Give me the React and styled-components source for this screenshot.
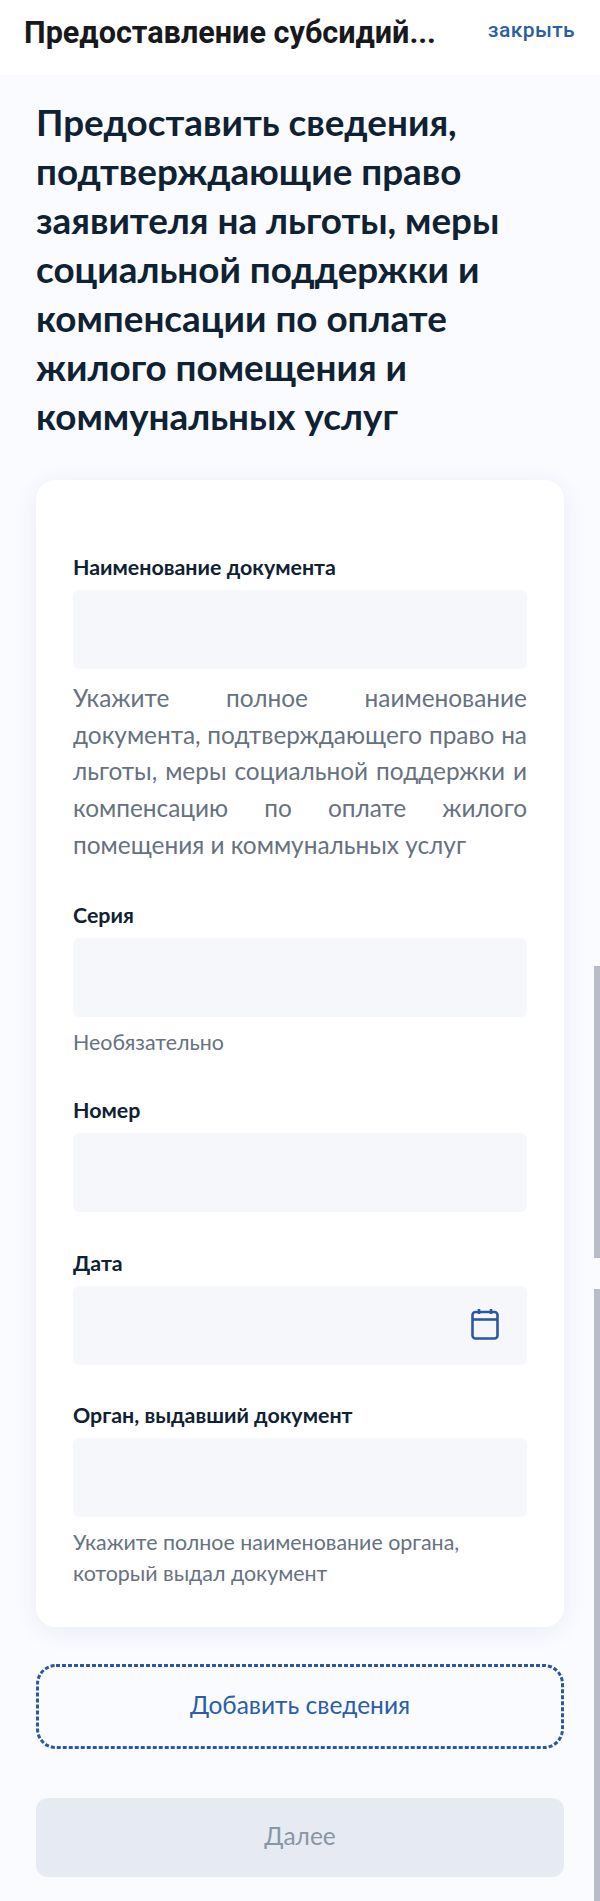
import React from "react";
import styled, { createGlobalStyle } from "styled-components";

const Global = createGlobalStyle`
  html, body { margin: 0; padding: 0; background: #fafbff; }
  * { box-sizing: border-box; }
`;

const Page = styled.div`
  position: relative;
  width: 600px;
  height: 1901px;
  overflow: hidden;
  background: #fafbff;
  font-family: Lato, "Noto Sans", sans-serif;
  color: #0f2233;
`;

const Header = styled.header`
  height: 75px;
  background: #fff;
  display: flex;
  align-items: flex-start;
  justify-content: space-between;
  padding: 0 25px 0 24px;
`;

const HeaderTitle = styled.div`
  font-family: Roboto, sans-serif;
  font-weight: 700;
  font-size: 30.6px;
  line-height: 32px;
  margin-top: 17px;
  color: #17191c;
`;

const CloseLink = styled.a`
  font-family: Roboto, sans-serif;
  font-weight: 500;
  font-size: 21px;
  line-height: 24px;
  margin-top: 18px;
  color: #2c5da8;
  letter-spacing: 0.4px;
`;

const Content = styled.main`
  padding: 23px 36px 0;
`;

const Heading = styled.h1`
  margin: 0 0 39px;
  font-size: 36.8px;
  line-height: 49px;
  font-weight: 700;
  color: #0f2233;
`;

const Card = styled.section`
  height: 1147px;
  background: #fff;
  border-radius: 20px;
  box-shadow: 0 4px 24px rgba(40, 70, 130, 0.08);
  padding: 73px 37px 0;
`;

const Field = styled.div`
  margin-bottom: ${(p) => p.$gap || 0}px;
`;

const Label = styled.label`
  display: block;
  font-size: 21.4px;
  line-height: 28px;
  height: 28px;
  font-weight: 700;
  color: #0f2233;
  margin-bottom: 9px;
`;

const InputBox = styled.div`
  height: 79px;
  background: #f5f7fb;
  border-radius: 6px;
  display: flex;
  align-items: center;
  justify-content: flex-end;
  padding-right: 28px;
`;

const HelpLarge = styled.p`
  margin: 11px 0 0;
  font-size: 24.4px;
  line-height: 36.7px;
  color: #66727f;
  text-align: justify;
`;

const HelpSmall = styled.p`
  margin: 10px 0 0;
  font-size: 21.4px;
  line-height: 30.7px;
  color: #66727f;
`;

const AddButton = styled.button`
  position: relative;
  display: block;
  width: 100%;
  height: 85px;
  margin-top: 37px;
  padding: 0 0 4px;
  background: transparent;
  border: 0;
  font: 400 24.5px Lato, "Noto Sans", sans-serif;
  color: #2c5da8;
`;

const DashedOutline = styled.svg`
  position: absolute;
  inset: 0;
  width: 100%;
  height: 100%;
`;

const NextButton = styled.button`
  display: block;
  width: 100%;
  height: 79px;
  margin-top: 49px;
  padding: 0 0 4px;
  background: #e6eaf3;
  border: 0;
  border-radius: 12px;
  font: 400 24.5px Lato, "Noto Sans", sans-serif;
  color: #8996a4;
`;

const ScrollThumb = styled.div`
  position: absolute;
  right: 0;
  width: 6px;
  top: ${(p) => p.$top}px;
  height: ${(p) => p.$height}px;
  background: #b8bcc9;
`;

const CalendarSvg = styled.svg`
  margin-bottom: 4px;
`;

const CalendarIcon = () => (
  <CalendarSvg width="28" height="32" viewBox="0 0 28 32" fill="none" stroke="#2c57a5" strokeWidth="2.6" strokeLinejoin="round">
    <rect x="1.5" y="4" width="25" height="26.5" rx="3" />
    <path d="M1.5 11.5h25" />
    <path d="M8 1v5M20 1v5" />
  </CalendarSvg>
);

export default function App() {
  return (
    <Page>
      <Global />
      <Header>
        <HeaderTitle>Предоставление субсидий...</HeaderTitle>
        <CloseLink>закрыть</CloseLink>
      </Header>
      <Content>
        <Heading>
          Предоставить сведения, подтверждающие право заявителя на льготы, меры социальной поддержки и компенсации по оплате жилого помещения и коммунальных услуг
        </Heading>
        <Card>
          <Field $gap={37}>
            <Label>Наименование документа</Label>
            <InputBox />
            <HelpLarge>
              Укажите полное наименование документа, подтверждающего право на льготы, меры социальной поддержки и компенсацию по оплате жилого помещения и коммунальных услуг
            </HelpLarge>
          </Field>
          <Field $gap={39}>
            <Label>Серия</Label>
            <InputBox />
            <HelpSmall>Необязательно</HelpSmall>
          </Field>
          <Field $gap={37}>
            <Label>Номер</Label>
            <InputBox />
          </Field>
          <Field $gap={36}>
            <Label>Дата</Label>
            <InputBox>
              <CalendarIcon />
            </InputBox>
          </Field>
          <Field>
            <Label>Орган, выдавший документ</Label>
            <InputBox />
            <HelpSmall>
              Укажите полное наименование органа,
              <br />
              который выдал документ
            </HelpSmall>
          </Field>
        </Card>
        <AddButton>
          <DashedOutline viewBox="0 0 528 85" fill="none">
            <rect x="1.5" y="1.5" width="525" height="82" rx="18.5" stroke="#2c57a5" strokeWidth="3" strokeDasharray="4 2" />
          </DashedOutline>
          Добавить сведения
        </AddButton>
        <NextButton>Далее</NextButton>
      </Content>
      <ScrollThumb $top={966} $height={292} />
      <ScrollThumb $top={1289} $height={612} />
    </Page>
  );
}
